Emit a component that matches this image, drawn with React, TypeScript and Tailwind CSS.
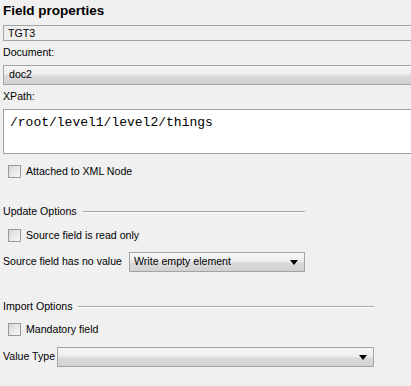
import React from "react";

const comboBg =
  "bg-[linear-gradient(to_bottom,#f6f6f6_0%,#eeeeee_45%,#dadada_55%,#d2d2d2_100%)]";

function Arrow() {
  return (
    <svg width="8" height="5" viewBox="0 0 8 5" className="shrink-0">
      <polygon points="0,0 8,0 4,5" fill="#000" />
    </svg>
  );
}

function Combo({ value, className }: { value: string; className: string }) {
  return (
    <div
      className={`flex items-center border border-[#a3a3a3] ${comboBg} pl-[4px] pr-[6px] ${className}`}
    >
      <span className="flex-1 truncate">{value}</span>
      <Arrow />
    </div>
  );
}

function Check({ label, className }: { label: string; className: string }) {
  return (
    <div className={`flex items-center pl-[5px] ${className}`}>
      <div className="w-[13px] h-[13px] border border-[#9a9a9a] bg-[linear-gradient(135deg,#d6d6d6_0%,#ececec_60%,#f6f6f6_100%)] shrink-0" />
      <span className="ml-[5px] whitespace-nowrap">{label}</span>
    </div>
  );
}

function GroupHeader({ label, width, className }: { label: string; width: string; className: string }) {
  return (
    <div className={`flex items-center ${width} ${className}`}>
      <span className="whitespace-nowrap">{label}</span>
      <div className="flex-1 ml-[6px] h-[2px] border-t border-[#a5a5a5] border-b border-b-white" />
    </div>
  );
}

export default function App() {
  return (
    <div
      className="w-[411px] h-[386px] overflow-hidden bg-[#f0f0f0] text-[10.6px] text-black px-[3px]"
      style={{ fontFamily: '"Liberation Sans", Arial, sans-serif' }}
    >
      <div className="h-[25px] pt-[2px] text-[13.5px] font-bold leading-[18px]">Field properties</div>
      <div className="h-[16px] mr-[-10px] border border-[#a3a3a3] bg-[#efefef] flex items-center pl-[4px] leading-none">
        TGT3
      </div>
      <div className="h-[24px] flex items-center">Document:</div>
      <div
        className={`h-[20px] mr-[-10px] flex items-center border border-[#a3a3a3] ${comboBg} pl-[5px]`}
      >
        doc2
      </div>
      <div className="h-[24px] flex items-center">XPath:</div>
      <div
        className="h-[45px] mr-[-10px] border border-[#a0a0a0] bg-white pl-[6px] pt-[5px] text-[13px] leading-[16px]"
        style={{ fontFamily: '"Liberation Mono", "Courier New", monospace' }}
      >
        /root/level1/level2/things
      </div>
      <Check label="Attached to XML Node" className="h-[34px] pt-[1px]" />
      <GroupHeader label="Update Options" width="w-[302px]" className="mt-[12px] h-[24px]" />
      <Check label="Source field is read only" className="h-[22px] pt-[1px]" />
      <div className="mt-[6px] h-[20px] flex items-center">
        <span className="w-[126px] shrink-0 whitespace-nowrap">Source field has no value</span>
        <Combo value="Write empty element" className="w-[176px] h-[20px] shrink-0" />
      </div>
      <GroupHeader label="Import Options" width="w-[371px]" className="mt-[23px] h-[24px]" />
      <Check label="Mandatory field" className="h-[20px] pt-[1px]" />
      <div className="mt-[8px] h-[20px] flex items-center">
        <span className="w-[54px] shrink-0 whitespace-nowrap">Value Type</span>
        <Combo value="" className="w-[317px] h-[20px] shrink-0" />
      </div>
    </div>
  );
}
